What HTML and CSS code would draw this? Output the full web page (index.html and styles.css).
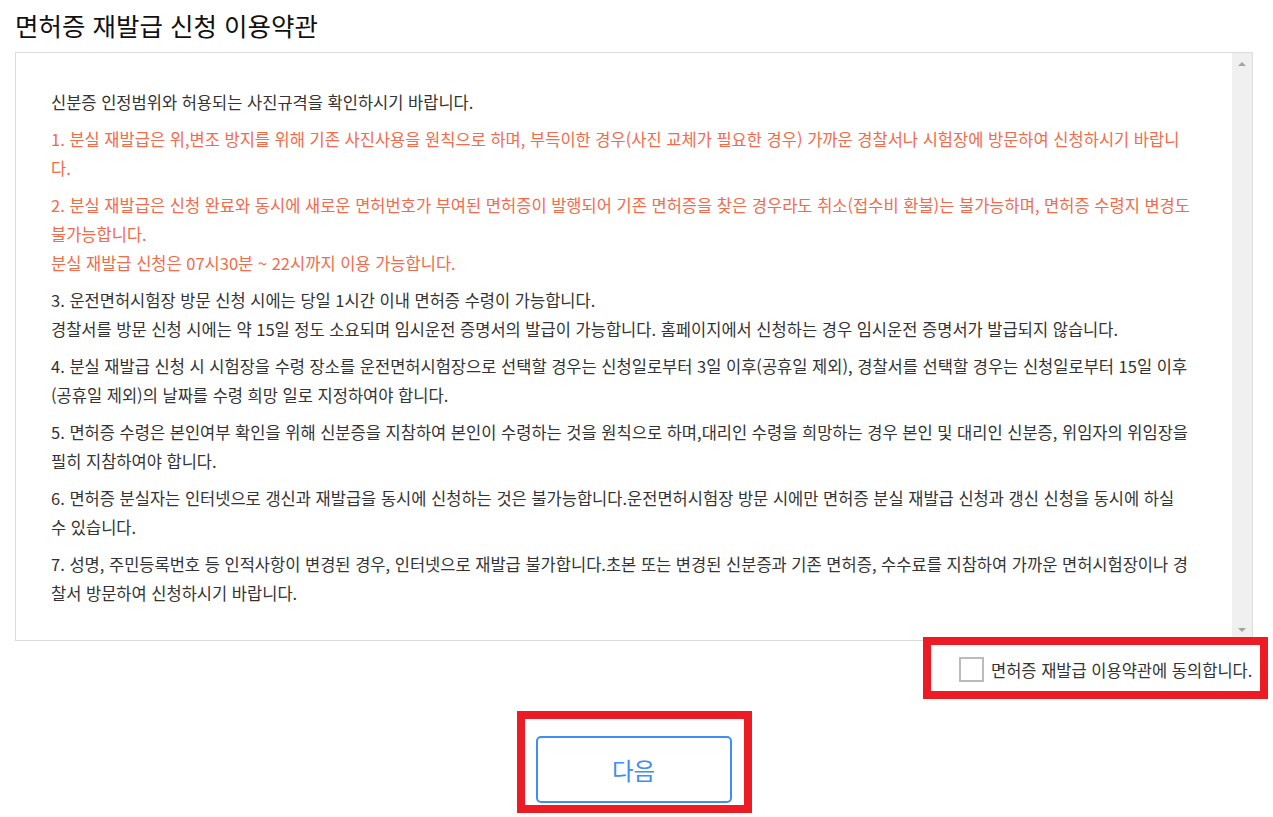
FILE: index.html
```html
<!DOCTYPE html>
<html lang="ko">
<head>
  <meta charset="UTF-8" />
  <meta name="viewport" content="width=device-width, initial-scale=1.0"/>
  <title>면허증 재발급 신청 이용약관</title>
  <link rel="stylesheet" href="styles.css">
</head>
<body>
  <div class="page">
    <h2 class="title">면허증 재발급 신청 이용약관</h2>

    <div class="terms">
      <div class="terms-body">
        <p>신분증 인정범위와 허용되는 사진규격을 확인하시기 바랍니다.</p>
        <p class="warn">1. 분실 재발급은 위,변조 방지를 위해 기존 사진사용을 원칙으로 하며, 부득이한 경우(사진 교체가 필요한 경우) 가까운 경찰서나 시험장에 방문하여 신청하시기 바랍니다.</p>
        <p class="warn">2. 분실 재발급은 신청 완료와 동시에 새로운 면허번호가 부여된 면허증이 발행되어 기존 면허증을 찾은 경우라도 취소(접수비 환불)는 불가능하며, 면허증 수령지 변경도 불가능합니다.<br>분실 재발급 신청은 07시30분 ~ 22시까지 이용 가능합니다.</p>
        <p>3. 운전면허시험장 방문 신청 시에는 당일 1시간 이내 면허증 수령이 가능합니다.<br>경찰서를 방문 신청 시에는 약 15일 정도 소요되며 임시운전 증명서의 발급이 가능합니다. 홈페이지에서 신청하는 경우 임시운전 증명서가 발급되지 않습니다.</p>
        <p>4. 분실 재발급 신청 시 시험장을 수령 장소를 운전면허시험장으로 선택할 경우는 신청일로부터 3일 이후(공휴일 제외), 경찰서를 선택할 경우는 신청일로부터 15일 이후(공휴일 제외)의 날짜를 수령 희망 일로 지정하여야 합니다.</p>
        <p>5. 면허증 수령은 본인여부 확인을 위해 신분증을 지참하여 본인이 수령하는 것을 원칙으로 하며,대리인 수령을 희망하는 경우 본인 및 대리인 신분증, 위임자의 위임장을 필히 지참하여야 합니다.</p>
        <p>6. 면허증 분실자는 인터넷으로 갱신과 재발급을 동시에 신청하는 것은 불가능합니다.운전면허시험장 방문 시에만 면허증 분실 재발급 신청과 갱신 신청을 동시에 하실 수&nbsp;있습니다.</p>
        <p>7. 성명, 주민등록번호 등 인적사항이 변경된 경우, 인터넷으로 재발급 불가합니다.초본 또는 변경된 신분증과 기존 면허증, 수수료를 지참하여 가까운 면허시험장이나 경찰서 방문하여 신청하시기 바랍니다.</p>
      </div>
      <div class="scrollbar">
        <span class="arrow up"></span>
        <span class="arrow down"></span>
      </div>
    </div>

    <div class="agree-row">
      <label class="agree mark">
        <input type="checkbox" id="agreeCheck">
        <span>면허증 재발급 이용약관에 동의합니다.</span>
      </label>
    </div>

    <div class="actions">
      <div class="next-wrap mark">
        <button class="btn-next" type="button">다음</button>
      </div>
    </div>
  </div>
</body>
</html>
```

FILE: styles.css
```css
body {
  margin: 0;
  background: #fff;
  font-family: "Noto Sans CJK KR", "Noto Sans", sans-serif;
  color: #333;
}
.page {
  padding: 0 20px 0 15px;
}
.title {
  margin: 0;
  padding-top: 9px;
  height: 52px;
  box-sizing: border-box;
  font-size: 25.5px;
  font-weight: normal;
  line-height: 32px;
  color: #111;
}
.terms {
  display: flex;
  height: 589px;
  box-sizing: border-box;
  border: 1px solid #dcdcdc;
}
.terms-body {
  flex: 1;
  padding: 35px 36px 0 35px;
  font-size: 16.5px;
  line-height: 29px;
}
.terms-body p {
  margin: 0 0 8px;
}
.warn {
  color: #f46a4a;
}
.scrollbar {
  width: 20px;
  background: #f0f0f0;
  display: flex;
  flex-direction: column;
  justify-content: space-between;
  align-items: center;
  padding: 9px 0 8px;
}
.arrow {
  width: 0;
  height: 0;
  border-left: 4px solid transparent;
  border-right: 4px solid transparent;
}
.arrow.up {
  border-bottom: 4px solid #a3a3a3;
}
.arrow.down {
  border-top: 4px solid #a3a3a3;
}
.mark {
  border: 8px solid #ed1c24;
}
.agree-row {
  display: flex;
  justify-content: flex-end;
  margin: -4px -15px 0 0;
}
.agree {
  display: flex;
  align-items: center;
  gap: 7px;
  width: 345px;
  height: 62px;
  box-sizing: border-box;
  padding: 3px 7px 0 28px;
  font-size: 16.5px;
  white-space: nowrap;
  color: #333;
}
.agree input {
  appearance: none;
  flex: none;
  margin: 0;
  width: 25px;
  height: 25px;
  border: 2px solid #bbb;
  background: #fff;
}
.actions {
  display: flex;
  justify-content: center;
  margin-top: 12px;
}
.next-wrap {
  padding: 17px 12px 2px 11px;
}
.btn-next {
  display: block;
  width: 196px;
  height: 67px;
  background: #fff;
  border: 2px solid #3d8ef5;
  border-radius: 5px;
  color: #3d8ef5;
  font-family: "Noto Sans CJK KR", sans-serif;
  font-size: 23.5px;
  cursor: pointer;
}
```
